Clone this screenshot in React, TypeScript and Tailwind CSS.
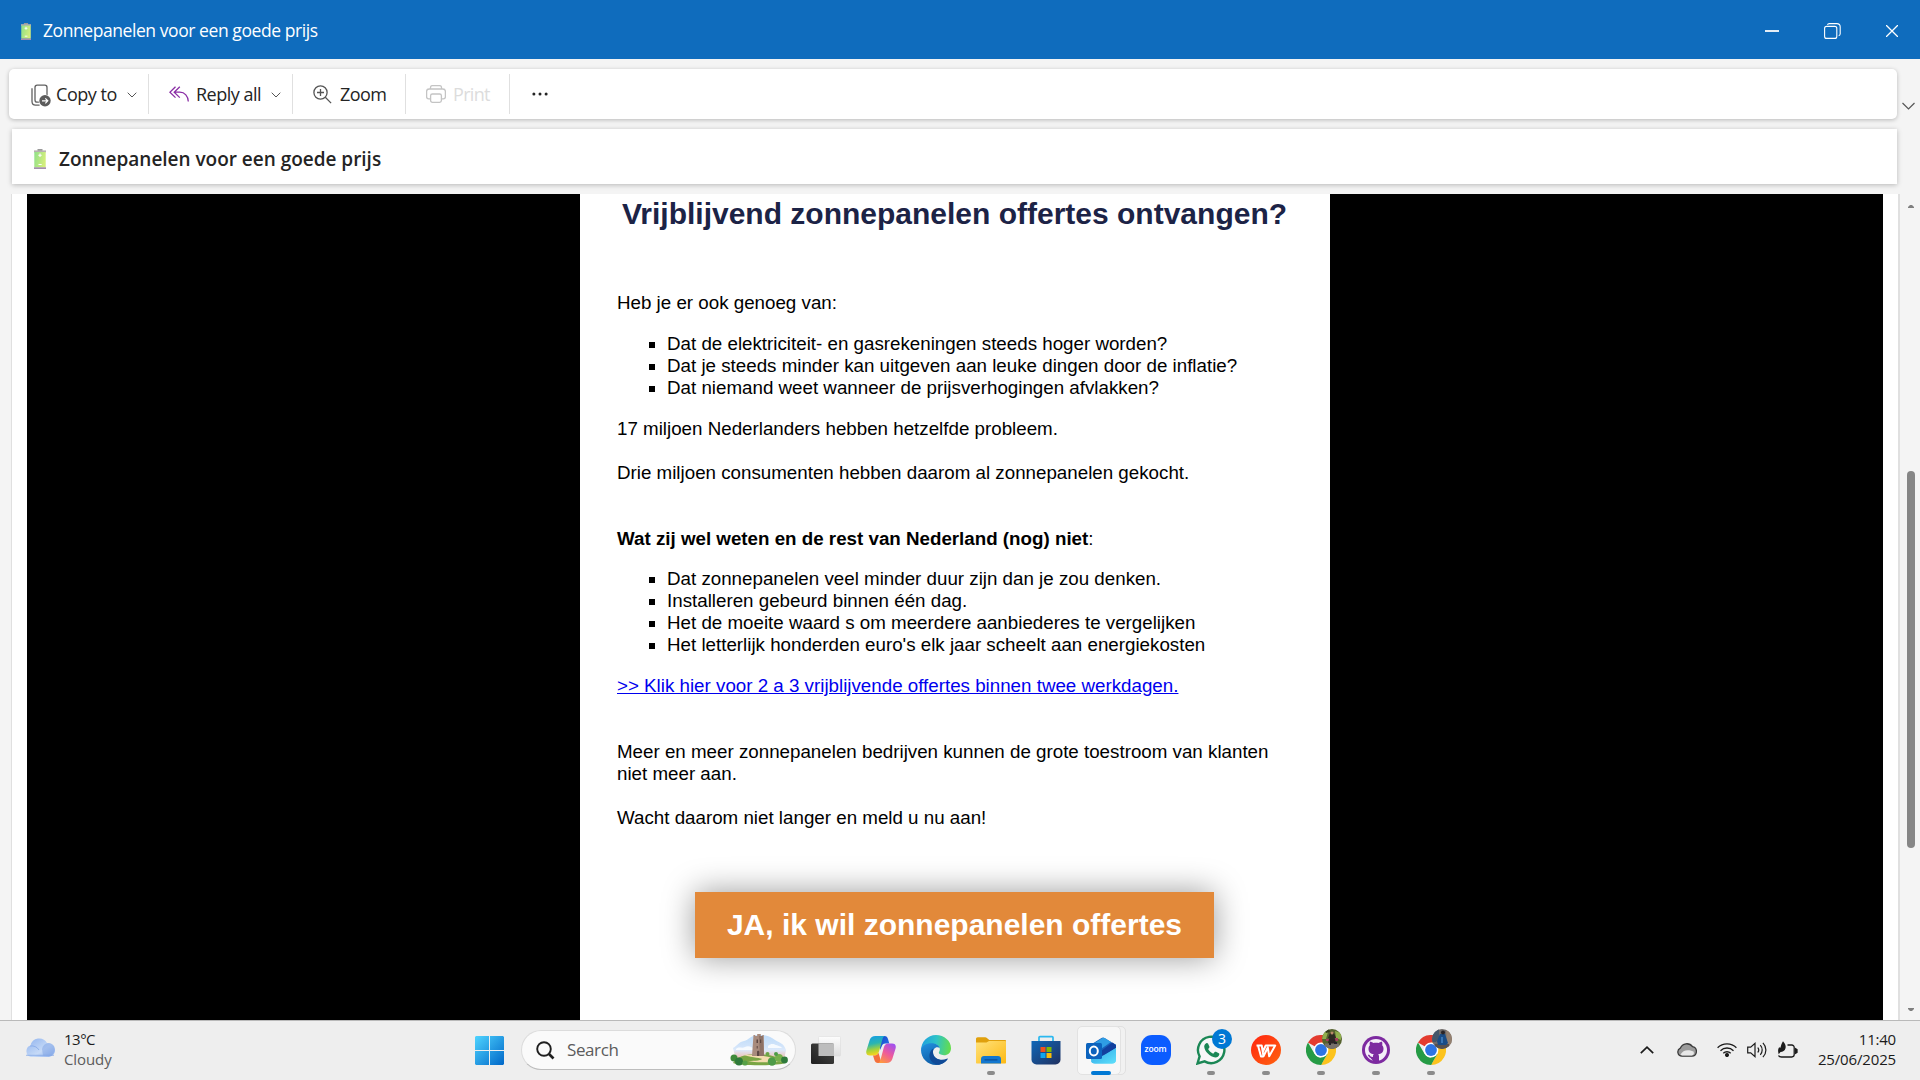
import React, { ReactNode } from "react";

const UI = "font-['Open_Sans','Noto_Sans',sans-serif]";
const MAIL = "font-['Liberation_Sans',Arial,sans-serif]";

function Battery({ className }: { className: string }) {
  return (
    <svg viewBox="0 0 12 20" className={className} preserveAspectRatio="none">
      <defs>
        <linearGradient id="cell" x1="0" x2="1" y1="0" y2="0.3">
          <stop offset="0" stopColor="#8fe08a" />
          <stop offset="1" stopColor="#d3ee7c" />
        </linearGradient>
      </defs>
      <rect x="3.5" y="0" width="5" height="2" fill="#9a9a9a" />
      <rect x="0" y="1.4" width="12" height="2" fill="#b5b0ae" />
      <rect x="0.3" y="3" width="11.4" height="15.5" fill="url(#cell)" />
      <rect x="0" y="18.3" width="12" height="1.7" fill="#a58fae" />
      <path d="M6 4.500v3.400M4.300 6.200h3.400M4.500 15.500h3.200" stroke="#fff" strokeWidth="1.1" />
    </svg>
  );
}

function Chevron() {
  return (
    <svg viewBox="0 0 10 6" className="h-[6px] w-[10px]" fill="none" stroke="#555" strokeWidth="1">
      <path d="M0.7 0.7 5 5 9.3 0.7" />
    </svg>
  );
}

function TitleBar() {
  return (
    <header className="flex h-[59px] items-center bg-[#0f6cbd] pl-[21px] pt-[3px] text-white">
      <Battery className="h-[17px] w-[10px]" />
      <span className="-mt-[2px] ml-[12px] whitespace-nowrap text-[17.5px] leading-6 tracking-[-0.43px]">Zonnepanelen voor een goede prijs</span>
      <div className="ml-auto flex items-center">
        <svg viewBox="0 0 14 2" className="mr-[45px] h-[2px] w-[14px]"><rect width="14" height="2" fill="#e3edf6" /></svg>
        <svg viewBox="0 0 17 16" className="mr-[45px] h-[16px] w-[17px]" fill="none" stroke="#fff" strokeWidth="1.1">
          <rect x="0.6" y="3.4" width="12.2" height="12" rx="2" />
          <path d="M3.4 1.8C3.8 1 4.4.6 5.2.6h7.600a3.400 3.400 0 0 1 3.400 3.400v6.800c0 1-.6 1.700-1.500 2" />
        </svg>
        <svg viewBox="0 0 12 12" className="mr-[22px] h-[12px] w-[12px]" stroke="#fff" strokeWidth="1.3"><path d="M0 0 12 12M12 0 0 12" /></svg>
      </div>
    </header>
  );
}

function Sep() {
  return <div className="h-[40px] w-px bg-[#e0e0e0]" />;
}

function Toolbar() {
  return (
    <div className="flex h-[50px] w-[1888px] items-center rounded-[5px] bg-white text-[18px] text-[#242424] shadow-[0_1px_4px_rgba(0,0,0,0.25)]">
      <div className="flex w-[139px] items-center pl-[22px]">
        <svg viewBox="0 0 20 23" className="mt-[2px] h-[23px] w-[20px]" fill="none">
          <rect x="4" y="1.2" width="12" height="17" rx="2.2" stroke="#616161" strokeWidth="1.3" />
          <path d="M1 4.2v13c0 2.300 1.500 3.900 3.600 3.900h4" stroke="#616161" strokeWidth="1.3" />
          <circle cx="14" cy="16.8" r="6.4" fill="#fff" />
          <circle cx="14" cy="16.8" r="5.7" fill="#5c5c5c" />
          <path d="M11 16.800h5.600M14.300 14.300l2.500 2.500-2.500 2.500" stroke="#fff" strokeWidth="1.2" />
        </svg>
        <span className="ml-[5px] w-[62px] whitespace-nowrap tracking-[-0.45px]">Copy to</span>
        <span className="ml-[9px] mt-[2px] flex"><Chevron /></span>
      </div>
      <Sep />
      <div className="flex w-[143px] items-center pl-[20px]">
        <svg viewBox="0 0 20 16" className="h-[16px] w-[20px]" fill="none" stroke="#8a2da5" strokeWidth="1.3">
          <path d="M6.500 0.800.9 6.200l5.600 5.400M10.800.8 5.200 6.200l5.600 5.400M5.400 6.200h5.400c5 0 8.300 4 8.500 9.400" />
        </svg>
        <span className="ml-[7px] w-[65px] whitespace-nowrap tracking-[-0.5px]">Reply all</span>
        <span className="ml-[10px] mt-[2px] flex"><Chevron /></span>
      </div>
      <Sep />
      <div className="flex w-[112px] items-center pl-[20px]">
        <svg viewBox="0 0 19 19" className="h-[19px] w-[19px]" fill="none" stroke="#555" strokeWidth="1.3">
          <circle cx="7.5" cy="7.5" r="6.600" />
          <path d="m12.300 12.300 5.800 5.800M7.500 4v7M4 7.500h7" />
        </svg>
        <span className="ml-[8px] whitespace-nowrap tracking-[-0.6px]">Zoom</span>
      </div>
      <Sep />
      <div className="flex w-[103px] items-center pl-[20px] text-[#dcdcdc]">
        <svg viewBox="0 0 20 18" className="h-[18px] w-[20px]" fill="none" stroke="#c4c4c4" strokeWidth="1.3">
          <path d="M4.500 4V2.600c0-1.100.8-2 2-2h7c1.100 0 2 .9 2 2V4" />
          <path d="M4.500 13.800H2.600c-1.100 0-2-.9-2-2V6.600C.6 5.100 1.800 4 3.200 4h13.600c1.400 0 2.600 1.100 2.600 2.600v5.200c0 1.100-.9 2-2 2h-1.900" />
          <rect x="4.600" y="9" width="10.800" height="8.300" rx="1.800" />
        </svg>
        <span className="ml-[7px] whitespace-nowrap tracking-[-0.700px]">Print</span>
      </div>
      <Sep />
      <svg viewBox="0 0 16 4" className="ml-[22px] h-[4px] w-[16px]" fill="#242424">
        <circle cx="1.900" cy="2" r="1.500" /><circle cx="8" cy="2" r="1.500" /><circle cx="14.100" cy="2" r="1.500" />
      </svg>
    </div>
  );
}

function SquareList({ items }: { items: string[] }) {
  return (
    <ul>
      {items.map((t) => (
        <li key={t} className="flex h-[22px] items-center whitespace-nowrap pl-[32px]">
          <span className="mr-[12px] mt-px h-[6px] w-[6px] bg-black" />
          {t}
        </li>
      ))}
    </ul>
  );
}

function Mail() {
  return (
    <article className={`${MAIL} flex w-[750px] flex-col bg-white px-[37px] text-[18.75px] leading-[22px] text-black`}>
      <h1 className="mr-px mt-[3px] h-[34px] whitespace-nowrap text-center text-[30px] font-bold leading-[34px] text-[#1c2346]">
        Vrijblijvend zonnepanelen offertes ontvangen?
      </h1>
      <p className="mt-[61px]">Heb je er ook genoeg van:</p>
      <div className="mt-[19px]">
        <SquareList
          items={[
            "Dat de elektriciteit- en gasrekeningen steeds hoger worden?",
            "Dat je steeds minder kan uitgeven aan leuke dingen door de inflatie?",
            "Dat niemand weet wanneer de prijsverhogingen afvlakken?",
          ]}
        />
      </div>
      <p className="mt-[19px]">17 miljoen Nederlanders hebben hetzelfde probleem.</p>
      <p className="mt-[22px]">Drie miljoen consumenten hebben daarom al zonnepanelen gekocht.</p>
      <p className="mt-[44px]"><b>Wat zij wel weten en de rest van Nederland (nog) niet</b>:</p>
      <div className="mt-[18px]">
        <SquareList
          items={[
            "Dat zonnepanelen veel minder duur zijn dan je zou denken.",
            "Installeren gebeurd binnen één dag.",
            "Het de moeite waard s om meerdere aanbiederes te vergelijken",
            "Het letterlijk honderden euro's elk jaar scheelt aan energiekosten",
          ]}
        />
      </div>
      <p className="mt-[19px] text-[#0000ee] underline">&gt;&gt; Klik hier voor 2 a 3 vrijblijvende offertes binnen twee werkdagen.</p>
      <p className="mt-[44px]">Meer en meer zonnepanelen bedrijven kunnen de grote toestroom van klanten niet meer aan.</p>
      <p className="mt-[22px]">Wacht daarom niet langer en meld u nu aan!</p>
      <div className="mr-px mt-[63px] flex h-[66px] w-[519px] items-center justify-center self-center whitespace-nowrap bg-[#e2893a] text-[30px] font-bold text-white shadow-[0_0_32px_rgba(0,0,0,0.4)]">
        JA, ik wil zonnepanelen offertes
      </div>
    </article>
  );
}

function Slot({ children, running }: { children: ReactNode; running?: boolean }) {
  return (
    <div className="relative flex h-[59px] w-[55px] items-center justify-center pb-px">
      {children}
      {running && <span className="absolute bottom-[5px] left-[24px] h-[4px] w-[8px] rounded-full bg-[#8b8b8b]" />}
    </div>
  );
}

const ICON = "h-[30px] w-[30px]";

function TaskView() {
  return (
    <svg viewBox="0 0 30 30" className={ICON}>
      <defs>
        <linearGradient id="tvd" x1="1" x2="0" y1="0" y2="1"><stop offset="0" stopColor="#4a4a48" /><stop offset="1" stopColor="#1f1f1f" /></linearGradient>
        <linearGradient id="tvl" x1="0" x2="0" y1="0" y2="1"><stop offset="0" stopColor="#fdfdfd" /><stop offset="1" stopColor="#dedede" /></linearGradient>
      </defs>
      <rect x="7.500" y="1.500" width="22" height="19.500" rx="1" fill="url(#tvl)" stroke="#d9d9d9" strokeWidth="0.5" />
      <rect x="0" y="8.500" width="23" height="20.500" rx="1.500" fill="url(#tvd)" />
      <rect x="7.500" y="8.500" width="15.500" height="12.500" fill="#bdbdbd" />
    </svg>
  );
}

function Copilot() {
  return (
    <svg viewBox="0 0 30 30" className={ICON}>
      <defs>
        <linearGradient id="cpa" x1="0" x2="0.2" y1="0" y2="1"><stop offset="0" stopColor="#129bea" /><stop offset="0.45" stopColor="#2bb5b0" /><stop offset="0.75" stopColor="#a4d23c" /><stop offset="1" stopColor="#f4d51c" /></linearGradient>
        <linearGradient id="cpb" x1="0.8" x2="0.2" y1="0" y2="1"><stop offset="0" stopColor="#a050f0" /><stop offset="0.5" stopColor="#ee5a9c" /><stop offset="1" stopColor="#ff9a3c" /></linearGradient>
        <linearGradient id="cpc" x1="0" x2="1" y1="0" y2="1"><stop offset="0" stopColor="#1648c8" /><stop offset="1" stopColor="#2a78ee" /></linearGradient>
      </defs>
      <path d="M14 1h4.500c2 0 2.900 1 3.500 3l1.300 4.400h-4c-2 0-3 1-3.600 3L14 15z" fill="url(#cpc)" />
      <path d="M9.500 1H19c-1.500.6-2.100 1.800-2.600 3.500L13 16.500c-.8 2.600-2 4-4.800 4H4c-3.300 0-4.400-2-3.500-5.200L3.700 5C4.600 2.300 6.500 1 9.500 1z" fill="url(#cpa)" />
      <path d="M7 20.500h1.500c2 0 3.200-.8 4-2.700l3 10.200H12c-2 0-3-1-3.600-3z" fill="#f4703c" />
      <path d="M20.500 28H12c1.500-.6 2.100-1.800 2.600-3.500L17.800 12.500c.8-2.600 2-4 4.800-4H26c3.300 0 4.400 2 3.500 5.200L26.300 24c-.9 2.700-2.800 4-5.800 4z" fill="url(#cpb)" />
    </svg>
  );
}

function Edge() {
  return (
    <svg viewBox="0 0 30 30" className={ICON}>
      <defs>
        <linearGradient id="eda" x1="0" x2="1" y1="0.3" y2="0.4"><stop offset="0" stopColor="#1f9ee0" /><stop offset="0.5" stopColor="#2ec3c8" /><stop offset="1" stopColor="#64dd4c" /></linearGradient>
        <linearGradient id="edb" x1="0" x2="0.5" y1="0" y2="1"><stop offset="0" stopColor="#2392e0" /><stop offset="1" stopColor="#0c59a4" /></linearGradient>
      </defs>
      <path d="M15 0c8.300 0 15 6 15 13.200 0 4.400-3.200 7-7 7-3.400 0-5.400-1.400-5.200-2.600.2-.9 1-1.500 1-3.400 0-2.600-2.500-5.200-6.800-5.200C6 9 1 12 0 15.500 0 7 6.500 0 15 0z" fill="url(#eda)" />
      <path d="M0 15C.4 11 5.500 8.300 10.500 8.300c4.500 0 7.500 2.200 8.200 4.600-3.500-2-7.200 1-6.700 5 .5 5 6 8.600 14.500 6.600C23.800 28 19.600 30 15 30 6.700 30 0 23.300 0 15z" fill="url(#edb)" />
      <path d="M12.500 13.500c-4.500 2.500-5.500 9-1.800 13 1.800 2 4.300 3.200 7 3.200 3.500-.4 6.600-2.300 8.900-5.400.5-.8-.1-1-.8-.6-6.500 2.800-13-.2-13.700-5.500-.2-1.800 0-3.500.4-4.700z" fill="#0f4a97" />
    </svg>
  );
}

function Folder() {
  return (
    <svg viewBox="0 0 30 30" className={ICON}>
      <defs><linearGradient id="fol" x1="0" x2="1" y1="0" y2="1"><stop offset="0" stopColor="#ffe27c" /><stop offset="1" stopColor="#fdb912" /></linearGradient></defs>
      <path d="M0 4c0-1 .7-1.700 1.700-1.700h7.500c.7 0 1.200.2 1.700.7L13.300 5H29c.6 0 1 .4 1 1v6H0z" fill="#e0a00c" />
      <path d="M0 7.500h10.500L13 6h16c.6 0 1 .4 1 1v20.500c0 .6-.4 1-1 1H1c-.6 0-1-.4-1-1z" fill="url(#fol)" />
      <path d="M5 28.500v-4.500c0-1.800 1.200-3 3-3h14c1.800 0 3 1.200 3 3v4.500z" fill="#1377cf" />
      <path d="M9 24.800h12" stroke="#0c4f98" strokeWidth="1.3" strokeLinecap="round" />
    </svg>
  );
}

function Store() {
  return (
    <svg viewBox="0 0 30 30" className={ICON}>
      <defs><linearGradient id="sto" x1="0" x2="1" y1="0" y2="1"><stop offset="0" stopColor="#0f67b8" /><stop offset="1" stopColor="#213160" /></linearGradient></defs>
      <path d="M8 7V2.500C8 1.800 8.300 1.700 9 1.700h12c.7 0 1 .1 1 .8V7" fill="none" stroke="#2bb8ef" strokeWidth="1.7" />
      <path d="M.5 6h29v18.500a5 5 0 0 1-5 5h-19a5 5 0 0 1-5-5z" fill="url(#sto)" />
      <path d="M9.500 12h5v5h-5z" fill="#f1511b" /><path d="M15.500 12h5v5h-5z" fill="#80b900" />
      <path d="M9.500 18h5v5h-5z" fill="#10a6ee" /><path d="M15.500 18h5v5h-5z" fill="#fbbc09" />
    </svg>
  );
}

function Outlook() {
  return (
    <svg viewBox="0 0 30 30" className={`${ICON} relative`}>
      <defs>
        <linearGradient id="olf" x1="0" x2="1" y1="0" y2="1"><stop offset="0" stopColor="#2aa3e6" /><stop offset="1" stopColor="#5fe0fb" /></linearGradient>
      </defs>
      <path d="M5 9.500 15.500 3a3 3 0 0 1 3 0L30 10v14L5 22z" fill="#1a5fb8" />
      <path d="M7 9 16 3.200a3 3 0 0 1 3.200 0L25 7 12 16z" fill="#2f9de4" />
      <path d="M13 18 30 9v15.500a4 4 0 0 1-4 4H9a4 4 0 0 1-4-4V22z" fill="url(#olf)" />
      <path d="M13 17.500 26.500 7.500 30 10v3L16 22z" fill="#123f9e" />
      <path d="M5 26.500 19 19.500l11-6.500v11.500a4 4 0 0 1-4 4H9c-2 0-3.300-.8-4-2z" fill="url(#olf)" />
      <rect x="0" y="8" width="16" height="16" rx="1.500" fill="#0c63bd" />
      <ellipse cx="7.800" cy="16" rx="4" ry="4.500" fill="none" stroke="#fff" strokeWidth="2" />
    </svg>
  );
}

function Zoom() {
  return (
    <div className="flex h-[30px] w-[30px] items-center justify-center rounded-[11px] bg-[#0b5cff] pb-[2px] font-['Open_Sans',sans-serif] text-[8.5px] font-semibold leading-none tracking-[-0.1px] text-white">
      zoom
    </div>
  );
}

function WhatsApp() {
  return (
    <>
      <svg viewBox="0 0 30 30" className={ICON}>
        <path d="M1.500 28.500 3.600 21.300A13.200 13.200 0 1 1 8.600 26.400z" fill="#fff" fillOpacity=".5" stroke="#1b8755" strokeWidth="2.4" />
        <path d="M10.300 8.200c.5-.3 1.300-.3 1.700.4l1.400 3c.2.500 0 .9-.3 1.300l-1 1.200c1.200 2.200 2.800 3.600 5.100 4.700l1.500-1.700c.4-.5.8-.5 1.300-.3l2.800 1.400c.6.300.6.700.5 1.300-.4 1.900-2 3-3.900 3-5.400-.5-11-6-11.200-10.900 0-1.500 1-2.800 2.100-3.400z" fill="#1b8755" />
      </svg>
      <span className="absolute left-[29px] top-[8px] flex h-[20px] w-[20px] items-center justify-center rounded-full bg-[#0078d4] text-[14px] leading-none text-white">3</span>
    </>
  );
}

function Wps() {
  return (
    <svg viewBox="0 0 30 30" className={ICON}>
      <defs><linearGradient id="wps" x1="0" x2="1" y1="0" y2="1"><stop offset="0" stopColor="#ff2410" /><stop offset="1" stopColor="#ff6410" /></linearGradient></defs>
      <circle cx="15" cy="15" r="15" fill="url(#wps)" />
      <path d="M5.500 10.500h5.200L12.500 21.300l4.300-8.800 1.400 8.800 6-10.800h-9.500L12 16.500M7 10.500l3 11h2.500" fill="none" stroke="#fff" strokeWidth="2" strokeLinejoin="round" />
    </svg>
  );
}

function Chrome({ photo }: { photo: "garden" | "blue" }) {
  return (
    <>
      <svg viewBox="0 0 30 30" className={ICON}>
        <path d="M15 15 2 7.500A15 15 0 0 1 28 7.500z" fill="#e33b2e" />
        <path d="M15 7.500H28A15 15 0 0 1 15 30l6.500-11.200z" fill="#fcc31e" />
        <path d="M2 7.500 8.500 18.800A7.500 7.500 0 0 0 18 22L15 30A15 15 0 0 1 2 7.500z" fill="#259b45" />
        <path d="M15 30 21.500 18.750 8.500 18.800 15 22.500z" fill="#259b45" />
        <path d="M2 7.500 15 7.500v4z" fill="#e33b2e" />
        <circle cx="15" cy="15" r="7.400" fill="#fff" /><circle cx="15" cy="15" r="5.900" fill="#2d74e4" />
      </svg>
      <svg viewBox="0 0 20 20" className="absolute left-[29px] top-[8px] h-[20px] w-[20px]">
        <defs><clipPath id={photo}><circle cx="10" cy="10" r="10" /></clipPath></defs>
        {photo === "garden" ? (
          <g clipPath={`url(#${photo})`}>
            <rect width="20" height="20" fill="#56622f" />
            <path d="M0 3h6l-2 7H0zM13 2l6 2v7l-5-2z" fill="#8fae4c" />
            <path d="M2 0h5l1 3-4 1zM15 0h3v3z" fill="#323c1c" />
            <path d="M8 4h4l2 5-4 2-4-2z" fill="#2c2a22" />
            <circle cx="10" cy="4" r="1.500" fill="#b98968" />
            <path d="M4 10h4v2H4zM13 9h3v3h-3z" fill="#a23f5c" />
            <path d="M7 10h6l1 4-4 1-4-1z" fill="#2e2526" />
            <path d="M3 14.500h14v6H3z" fill="#77706a" /><path d="M7 14h2v2H7zM12 13h3v2h-3z" fill="#25222a" />
          </g>
        ) : (
          <g clipPath={`url(#${photo})`}>
            <rect width="20" height="20" fill="#6f6a68" />
            <path d="M0 0h7v9l-3 4H0z" fill="#43566b" /><path d="M14 0h6v20h-5z" fill="#94806f" />
            <path d="M3 15h14v5H3z" fill="#57504e" />
            <path d="M8 5h5l3 9-2 2H6l-1-4z" fill="#1a4c86" />
            <path d="M9 8h2v6H9z" fill="#3a76b5" />
            <circle cx="11" cy="3.500" r="2" fill="#2a2427" />
          </g>
        )}
      </svg>
    </>
  );
}

function GitHub() {
  return (
    <svg viewBox="0 0 30 30" className={ICON}>
      <circle cx="15" cy="15" r="14" fill="#7d2aa0" />
      <circle cx="15" cy="15" r="11" fill="#f4eef8" />
      <path d="M12 26v-3.300c-2.800.4-3.700-.8-4.500-2.300M12 26.200v-5c0-1 .3-1.500.8-2-3.200-.4-5.300-1.900-5.300-5.500 0-1.400.5-2.600 1.300-3.500-.3-1.100-.2-2.300.2-3.500 1.400 0 2.500.6 3.400 1.300 1.700-.4 3.500-.4 5.200 0 .9-.7 2-1.300 3.400-1.300.4 1.200.5 2.400.2 3.500.8.900 1.300 2.100 1.300 3.500 0 3.600-2.100 5.100-5.300 5.500.5.500.8 1.200.8 2.200v4.800z" fill="#7d2aa0" />
      <path d="M12 22.600c-2.600.4-3.400-.8-4.200-2.200" fill="none" stroke="#7d2aa0" strokeWidth="1.5" strokeLinecap="round" />
    </svg>
  );
}

function SearchArt() {
  return (
    <svg viewBox="0 0 58 32" className="h-[32px] w-[58px]">
      <defs>
        <linearGradient id="sky" x1="0" x2="0" y1="0" y2="1"><stop offset="0" stopColor="#a9d0f8" stopOpacity="0.7" /><stop offset="0.6" stopColor="#dce9fb" /><stop offset="1" stopColor="#f6b4a2" /></linearGradient>
      </defs>
      <path d="M3 14C8 11 9 8 14 7S20 1 29 1s13 3 16 5 9 3 11 10l-2 10H6z" fill="url(#sky)" />
      <path d="M6 15c3-3 6 0 9-2s8 0 9 3H6zM38 12c3-3 6-2 8-1s5 1 6 3H38z" fill="#fff" fillOpacity=".8" />
      <path d="M3 29c3-6 12-9 25-9s24 4 27 9c-6 3-46 3-52 0z" fill="#7aa544" />
      <path d="M14 21c9-1 30 1 38 7-12 0-28 1-34-1 8 0 14-1 14-2s-9-1-18-4z" fill="#f3dcae" />
      <path d="M23.500 1h1.700v1h2V0h3.600v2h1.500V1h1.500L34 22H22z" fill="#a88b7d" />
      <path d="M29 2h4l1 20h-4z" fill="#8d7267" />
      <path d="M26.500 5.500H28v3.500h-1.500zM30 5.500h1.200V9H30zM26.700 12h1v2.500h-1zM27 18c0-1.700 2.400-1.700 2.400 0v4H27z" fill="#5c4743" />
      <circle cx="4" cy="24" r="3.500" fill="#3f8a3a" /><circle cx="9" cy="27.500" r="4" fill="#2f7a3b" /><circle cx="15" cy="29" r="2.600" fill="#57a047" />
      <circle cx="42" cy="27.500" r="4.200" fill="#4e9b48" /><circle cx="49" cy="24" r="4" fill="#77b04c" /><circle cx="54.500" cy="26" r="3.400" fill="#2f7a3b" />
      <circle cx="46" cy="20" r="2" fill="#4e9b48" /><circle cx="37.500" cy="20" r="2" fill="#6aa545" />
    </svg>
  );
}

function Taskbar() {
  return (
    <footer className="flex h-[60px] items-center border-t border-[#b9b9b9] bg-[#eeeeee] text-[15px] text-[#1b1b1b]">
      <div className="flex w-[475px] items-center pl-[25px]">
        <svg viewBox="0 0 30 20" className="-mt-[7px] h-[20px] w-[30px]">
          <defs><linearGradient id="cl" x1="0" x2="1" y1="0" y2="1"><stop offset="0" stopColor="#8fb2ee" /><stop offset="0.6" stopColor="#c6daf7" /><stop offset="1" stopColor="#8badec" /></linearGradient></defs>
          <path d="M6 20a6 6 0 0 1-.5-11.500A8.900 8.900 0 0 1 22 6a7 7 0 0 1 2 14z" fill="url(#cl)" />
          <path d="M17 12a7.600 7.600 0 0 1 7-6 7 7 0 0 1 5 3c2 5-1 9.500-5 9.500H18z" fill="#789ee3" fillOpacity=".45" />
          <path d="M5 9c4-.5 7 .8 9 4M1 18.300h28" stroke="#7ea2e6" strokeWidth="1" fill="none" opacity=".7" />
        </svg>
        <div className="-mt-[4px] ml-[9px] flex flex-col leading-[20px]">
          <span className="tracking-[-0.5px]">13°C</span>
          <span className="tracking-[-0.1px] text-[#5c5c5c]">Cloudy</span>
        </div>
      </div>
      <svg viewBox="0 0 29 29" className="h-[29px] w-[29px]">
        <defs><linearGradient id="win" x1="0" x2="1" y1="0" y2="1"><stop offset="0" stopColor="#4fd4ff" /><stop offset="1" stopColor="#0067c8" /></linearGradient></defs>
        <path d="M1 0h13v14H0V1zM15 0h13l1 1v13H15zM0 15h14v14H1l-1-1zM15 15h14v13l-1 1H15z" fill="url(#win)" />
      </svg>
      <div className="-mt-px ml-[17px] flex h-[40px] w-[275px] items-center rounded-full border border-[#dcdcdc] border-b-[#bdbdbd] bg-[#fafafa] pl-[14px]">
        <svg viewBox="0 0 19 19" className="h-[19px] w-[19px]" fill="none" stroke="#1f1f1f">
          <circle cx="8" cy="8" r="6.800" strokeWidth="1.9" /><path d="m13 13 4.500 4.500" strokeWidth="2.7" />
        </svg>
        <span className="ml-[12px] text-[17px] tracking-[-0.4px] text-[#5c5c5c]">Search</span>
        <span className="ml-auto mr-[7px] flex"><SearchArt /></span>
      </div>
      <div className="ml-[2px] flex">
        <Slot><TaskView /></Slot>
        <Slot><Copilot /></Slot>
        <Slot><Edge /></Slot>
        <Slot running><Folder /></Slot>
        <Slot><Store /></Slot>
        <Slot>
          <span className="absolute left-[11px] top-[5px] h-[49px] w-[42px] rounded-[5px] border border-[#e0e0e0] bg-[#f1f1f1]" />
          <span className="absolute left-[4px] top-[5px] h-[49px] w-[44px] rounded-[5px] border border-[#e2e2e2] bg-[#f7f7f7]" />
          <Outlook />
          <span className="absolute bottom-[5px] left-[18px] h-[4px] w-[20px] rounded-full bg-[#0078d4]" />
        </Slot>
        <Slot><Zoom /></Slot>
        <Slot running><WhatsApp /></Slot>
        <Slot running><Wps /></Slot>
        <Slot running><Chrome photo="garden" /></Slot>
        <Slot running><GitHub /></Slot>
        <Slot running><Chrome photo="blue" /></Slot>
      </div>
      <div className="-mt-[2px] ml-auto flex items-center">
        <svg viewBox="0 0 14 8" className="h-[8px] w-[14px]" fill="none" stroke="#1b1b1b" strokeWidth="1.7"><path d="M.8 7.200 7 1.200l6.200 6" /></svg>
        <svg viewBox="0 0 20 15" className="ml-[23px] h-[15px] w-[20px]">
          <path d="M5 14.200a4.200 4.200 0 0 1-1.700-8A7 7 0 0 1 15.500 4.700 4.800 4.800 0 0 1 15 14.200z" fill="#9b9b9b" stroke="#3a3a3a" strokeWidth="1.3" />
          <path d="M3.500 12.500C6 8.500 10 7 16.500 9.500a3 3 0 0 1-1.500 4H5z" fill="#e8e8e8" />
        </svg>
        <svg viewBox="0 0 20 15" className="ml-[20px] h-[15px] w-[20px]" fill="none" stroke="#1b1b1b" strokeWidth="1.3">
          <path d="M.6 5.800a13.300 13.300 0 0 1 18.800 0M3.500 8.700a9.200 9.200 0 0 1 13 0M6.300 11.300a5.200 5.200 0 0 1 7.400 0" /><circle cx="10" cy="13" r="1.400" fill="#1b1b1b" />
        </svg>
        <svg viewBox="0 0 20 18" className="ml-[10px] h-[18px] w-[20px]" fill="none" stroke="#1b1b1b" strokeWidth="1.2">
          <path d="M.7 6.200h3L8 2.300v13.400l-4.300-3.900h-3zM10.800 6.500c1.100 1.400 1.100 3.600 0 5M13.300 4.200c2.500 2.700 2.500 6.900 0 9.600M15.900 1.800c4 4.100 4 10.300 0 14.400" />
        </svg>
        <svg viewBox="0 0 21 18" className="ml-[10px] h-[18px] w-[21px]" fill="none" stroke="#1b1b1b" strokeWidth="1.3">
          <path d="M10.500 4h4.300a2.400 2.400 0 0 1 2.400 2.400v7.200a2.400 2.400 0 0 1-2.400 2.400H4.500c-1.500 0-2.500-.5-3-1.500" /><path d="M18.500 7.700v4.600l1.500-1V8.700z" fill="#1b1b1b" />
          <path d="M6 .2c2.300 2.400 3.100 4.800 2.500 7-.6 2.500-2.800 3.800-5 3.900L1.700 13.300c-.9-3-.9-4.800.4-7 .6.500 1 .6 1.400.3C4 4.300 4.700 2 6 .2z" fill="#1b1b1b" strokeWidth="0" />
        </svg>
        <div className="-mt-[2px] ml-[20px] mr-[24px] flex w-[78px] flex-col items-end leading-[20px]">
          <span className="tracking-[-0.2px]">11:40</span>
          <span className="whitespace-nowrap tracking-[-0.15px]">25/06/2025</span>
        </div>
      </div>
    </footer>
  );
}

export default function App() {
  return (
    <div className={`${UI} flex h-[1080px] w-[1920px] flex-col overflow-hidden bg-[#f4f4f4]`}>
      <TitleBar />
      <div className="flex h-[60px] pl-[9px] pt-[10px]">
        <Toolbar />
        <svg viewBox="0 0 13 8" className="ml-[5px] mt-[33px] h-[8px] w-[13px]" fill="none" stroke="#555" strokeWidth="1.2"><path d="M.5 1 6.500 7l6-6" /></svg>
      </div>
      <div className="ml-[12px] mt-[10px] flex h-[55px] w-[1885px] items-center bg-white pl-[22px] pt-[5px] shadow-[0_1px_5px_rgba(0,0,0,0.25)]">
        <Battery className="h-[20px] w-[12px]" />
        <span className="ml-[13px] whitespace-nowrap text-[19px] font-semibold tracking-[-0.02px] text-[#242424]">Zonnepanelen voor een goede prijs</span>
      </div>
      <div className="mt-[10px] flex h-[826px]">
        <main className="ml-[11px] flex w-[1889px] border-l border-r-2 border-[#e0e0e0] bg-white pl-[15px]">
          <div className="w-[553px] bg-black" />
          <Mail />
          <div className="w-[553px] bg-black" />
        </main>
        <aside className="flex w-[20px] flex-col items-center pl-[2px]">
          <svg viewBox="0 0 6 3" className="mt-[11px] h-[3px] w-[6px]" fill="#7f7f7f"><path d="M0 3V2l2-2h2l2 2v1z" /></svg>
          <div className="mt-[263px] h-[377px] w-[8px] rounded-full bg-[#868686]" />
          <svg viewBox="0 0 6 3" className="mb-[9px] mt-auto h-[3px] w-[6px]" fill="#7f7f7f"><path d="M0 0v1l2 2h2l2-2V0z" /></svg>
        </aside>
      </div>
      <Taskbar />
    </div>
  );
}
